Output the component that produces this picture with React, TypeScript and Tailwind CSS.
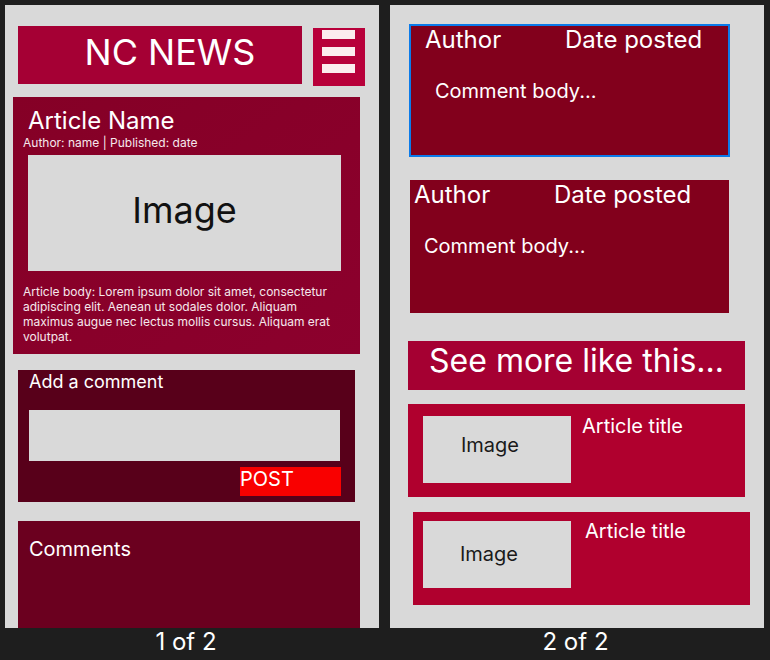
import React from 'react';

const CommentCard: React.FC<{ selected?: boolean }> = ({ selected = false }) => (
  <div
    className={`h-[133px] bg-[#82001c] text-white ${
      selected ? 'ml-[19px] w-[321px] border-2 border-[#0b7bea] pt-[2px] pl-[14px]' : 'ml-[20px] w-[319px] h-[132px] pt-[3px] pl-[4px]'
    }`}
  >
    <div className="flex text-[24px] leading-none">
      <span className="w-[140px]">Author</span>
      <span>Date posted</span>
    </div>
    <div className="mt-[29px] pl-[10px] text-[20px] leading-none">Comment body...</div>
  </div>
);

const RelatedCard: React.FC<{ shifted?: boolean }> = ({ shifted = false }) => (
  <div
    className={`w-[337px] h-[93px] bg-[#b0002e] flex items-start ${
      shifted ? 'ml-[23px] mt-[15px] pt-[9px] pl-[10px]' : 'ml-[18px] mt-[14px] pt-[12px] pl-[15px]'
    }`}
  >
    <div
      className={`w-[148px] h-[67px] bg-[#d9d9d9] flex items-center justify-center text-[20px] leading-none text-[#1a1a1a] ${
        shifted ? 'pr-[16px] pb-[2px]' : 'pr-[14px] pb-[9px]'
      }`}
    >
      Image
    </div>
    <div className={`text-white text-[20px] leading-none ${shifted ? 'ml-[14px]' : 'ml-[11px]'}`}>Article title</div>
  </div>
);

export default function App() {
  return (
    <div className="w-[770px] h-[660px] bg-[#1e1e1e] flex gap-[11px] pl-[5px] pt-[5px] font-['Inter',sans-serif]">
      {/* page 1 */}
      <div className="w-[374px] flex flex-col">
        <div className="h-[623px] bg-[#d9d9d9] flex flex-col pt-[21px]">
          <div className="flex items-start ml-[13px]">
            <div className="w-[284px] h-[58px] bg-[#a50034] flex items-center justify-center pl-[20px] pb-[6px] text-white text-[36px] leading-none">
              NC NEWS
            </div>
            <div className="ml-[11px] mt-[2px] w-[52px] h-[58px] bg-[#b8003a] flex flex-col gap-[8px] pt-[2px] pl-[9px]">
              <div className="w-[33px] h-[9px] bg-[#fcecee]" />
              <div className="w-[33px] h-[9px] bg-[#fcecee]" />
              <div className="w-[33px] h-[9px] bg-[#fcecee]" />
            </div>
          </div>

          <div className="ml-[8px] mt-[11px] w-[347px] h-[257px] bg-linear-to-br from-[#850026] to-[#8c002d] text-white pt-[12px]">
            <div className="pl-[15px] text-[24px] leading-none">Article Name</div>
            <div className="pl-[10px] mt-[4px] text-[12px] leading-none text-[#f6e8ec]">
              Author: name | Published: date
            </div>
            <div className="ml-[15px] mt-[6px] w-[313px] h-[116px] bg-[#d9d9d9] flex items-center justify-center pb-[6px] text-[36px] leading-none text-[#111]">
              Image
            </div>
            <p className="ml-[10px] mt-[13px] w-[318px] text-[12px] leading-[15px] text-[#f6e8ec]">
              Article body: Lorem ipsum dolor sit amet, consectetur adipiscing elit. Aenean ut sodales dolor. Aliquam
              maximus augue nec lectus mollis cursus. Aliquam erat volutpat.
            </p>
          </div>

          <div className="ml-[13px] mt-[16px] w-[337px] h-[132px] bg-[#58001a] pt-[3px] pl-[11px] flex flex-col">
            <div className="text-[18px] leading-none text-white">Add a comment</div>
            <div className="mt-[19px] w-[311px] h-[51px] bg-[#d9d9d9]" />
            <button className="ml-[211px] mt-[6px] w-[101px] h-[29px] bg-[#f90000] text-white text-[20px] leading-none text-left pt-[2px] self-start flex items-start">
              POST
            </button>
          </div>

          <div className="ml-[13px] mt-[19px] w-[342px] flex-1 bg-[#6b001f] pt-[18px] pl-[11px] text-white text-[20px] leading-none">
            Comments
          </div>
        </div>
        <div className="pt-[2px] pr-[12px] text-center text-white text-[24px] leading-none">1 of 2</div>
      </div>

      {/* page 2 */}
      <div className="w-[374px] flex flex-col">
        <div className="h-[623px] bg-[#d9d9d9] flex flex-col pt-[19px]">
          <CommentCard selected />
          <div className="mt-[23px]">
            <CommentCard />
          </div>

          <div className="ml-[18px] mt-[28px] w-[337px] h-[49px] bg-[#a50032] flex items-center justify-center pb-[10px] text-white text-[32px] leading-none">
            See more like this...
          </div>

          <RelatedCard />
          <RelatedCard shifted />
        </div>
        <div className="pt-[2px] pr-[3px] text-center text-white text-[24px] leading-none">2 of 2</div>
      </div>
    </div>
  );
}
